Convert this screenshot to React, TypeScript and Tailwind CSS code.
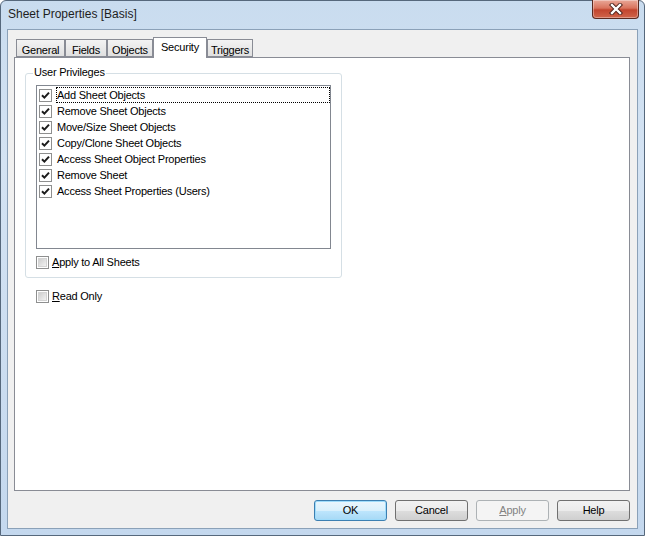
const privileges = [
  "Add Sheet Objects",
  "Remove Sheet Objects",
  "Move/Size Sheet Objects",
  "Copy/Clone Sheet Objects",
  "Access Sheet Object Properties",
  "Remove Sheet",
  "Access Sheet Properties (Users)",
];

const tabs = [
  { label: "General", w: "w-[49px]" },
  { label: "Fields", w: "w-[42px]" },
  { label: "Objects", w: "w-[46px]" },
  { label: "Security", w: "w-[54px]", active: true },
  { label: "Triggers", w: "w-[46px]" },
];

const CheckBox = ({ checked, flat }: { checked?: boolean; flat?: boolean }) => (
  <span className="w-[13px] h-[13px] shrink-0 border border-[#8e8f8f] bg-white flex items-center justify-center">
    {checked ? (
      <svg width="9" height="9" viewBox="0 0 9 9">
        <polyline points="1,4.2 3.4,6.6 8,1.6" fill="none" stroke="#1c1c1c" strokeWidth="2" />
      </svg>
    ) : flat ? null : (
      <span className="w-[9px] h-[9px] bg-linear-to-br from-[#cfcfcf] to-[#f2f2f2] border border-[#d4d4d4]" />
    )}
  </span>
);

const Button = ({ label, kind }: { label: React.ReactNode; kind?: "default" | "disabled" }) => {
  let cls =
    "border-[#707070] bg-[linear-gradient(#f2f2f2_0%,#ebebeb_50%,#dddddd_51%,#cfcfcf_100%)] text-black";
  if (kind === "default")
    cls =
      "border-[#3c7fb1] bg-[linear-gradient(#eaf6fd_0%,#d9f0fc_50%,#bee6fd_51%,#a7d9f5_100%)] text-black shadow-[inset_0_0_0_1px_#9fdcfb]";
  if (kind === "disabled") cls = "border-[#adb2b5] bg-[#f4f4f4] text-[#838383]";
  return (
    <div className={`w-[73px] h-[21px] rounded-[3px] border flex items-center justify-center ${cls}`}>
      {label}
    </div>
  );
};

export default function App() {
  return (
    <div className="w-[645px] h-[536px] relative flex flex-col border border-[#56687c] rounded-t-[6px] px-[6px] pb-[6px] bg-[linear-gradient(180deg,#c9dcef_0%,#d4e3f3_30%,#c4d8ee_100%)] font-['Liberation_Sans',Arial,sans-serif] text-[11px] tracking-[-0.22px] text-black">
      {/* title bar */}
      <div className="h-[28px] flex items-center pl-[1px] pb-[2px] text-[12px] tracking-normal text-[#1e1e1e]">
        Sheet Properties [Basis]
      </div>
      <div className="absolute top-[-1px] right-[5px] w-[47px] h-[19px] rounded-b-[4px] border border-[#5b2a20] border-t-0 bg-[linear-gradient(#e9a898_0%,#d9735d_45%,#c2452e_55%,#d0654b_100%)] flex items-center justify-center shadow-[inset_0_0_0_1px_rgba(255,255,255,0.35)]">
        <svg width="14" height="12" viewBox="0 0 14 12">
          <path d="M3 2 L11 10 M11 2 L3 10" stroke="#4a1f18" strokeWidth="4.2" strokeLinecap="square" />
          <path d="M3 2 L11 10 M11 2 L3 10" stroke="#ffffff" strokeWidth="2.4" strokeLinecap="square" />
        </svg>
      </div>

      {/* client */}
      <div className="flex-1 border border-[#8ba1b8] bg-[#f0f0f0] flex flex-col pt-[7px] pl-[6px] pr-[7px]">
        <div className="h-[21px] flex items-end pl-[2px] -mb-px relative z-10">
          {tabs.map((t) =>
            t.active ? (
              <div
                key={t.label}
                className={`${t.w} h-[21px] border border-b-0 border-[#898c95] bg-white flex justify-center pt-[1px]`}
              >
                {t.label}
              </div>
            ) : (
              <div
                key={t.label}
                className={`${t.w} h-[18px] mb-px border border-[#898c95] bg-linear-to-b from-[#f3f3f3] to-[#e0e0e0] flex justify-center pt-[2px]`}
              >
                {t.label}
              </div>
            )
          )}
        </div>

        <div className="h-[434px] border border-[#898c95] bg-white pl-[10px] pt-[15px]">
          <div className="relative w-[317px] h-[205px] border border-[#d5dfe5] rounded-[3px] pl-[10px] pt-[11px]">
            <span className="absolute left-[7px] top-[-8px] px-[1px] bg-white leading-[13px]">User Privileges</span>
            <div className="w-[295px] h-[164px] border border-[#828790] bg-white pt-px">
              {privileges.map((p, i) => (
                <div key={p} className="h-[16px] flex items-center pl-[2px]">
                  <CheckBox checked flat />
                  <span
                    className={`ml-[4px] flex-1 h-[16px] flex items-center border border-dotted ${
                      i === 0 ? "border-black" : "border-transparent"
                    }`}
                  >
                    {p}
                  </span>
                </div>
              ))}
            </div>
            <div className="mt-[7px] h-[13px] flex items-center gap-[3px]">
              <CheckBox />
              <span>
                <span className="underline">A</span>pply to All Sheets
              </span>
            </div>
          </div>
          <div className="mt-[12px] ml-[11px] h-[13px] flex items-center gap-[3px]">
            <CheckBox />
            <span>
              <span className="underline">R</span>ead Only
            </span>
          </div>
        </div>

        <div className="mt-[9px] flex justify-end gap-[8px]">
          <Button label="OK" kind="default" />
          <Button label="Cancel" />
          <Button
            label={
              <span>
                <span className="underline">A</span>pply
              </span>
            }
            kind="disabled"
          />
          <Button label="Help" />
        </div>
      </div>
    </div>
  );
}
